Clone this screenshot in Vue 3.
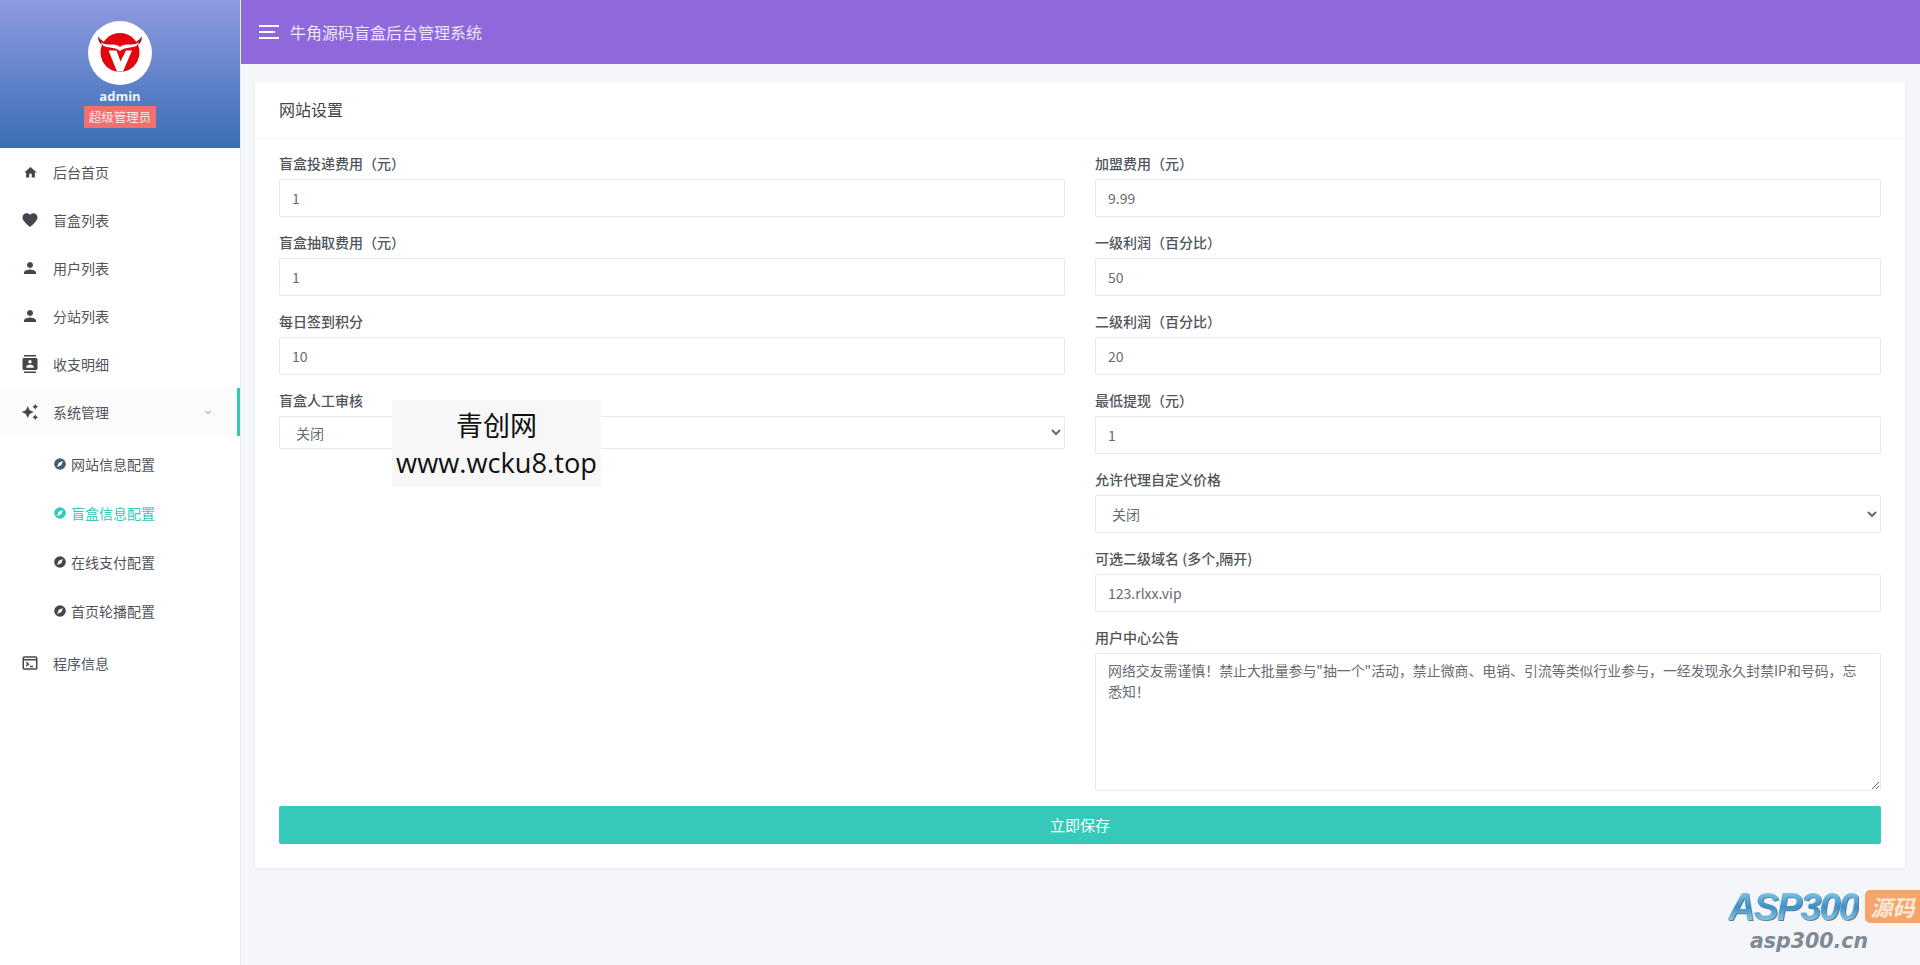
<script setup>
const menu = [
  { t: '后台首页', i: 'home', c: 'ico small' },
  { t: '盲盒列表', i: 'heart', c: 'ico' },
  { t: '用户列表', i: 'user', c: 'ico' },
  { t: '分站列表', i: 'user', c: 'ico' },
  { t: '收支明细', i: 'contacts', c: 'ico' },
]
const subs = [
  { t: '网站信息配置', c: 'sub teal-dark' },
  { t: '盲盒信息配置', c: 'sub active' },
  { t: '在线支付配置', c: 'sub' },
  { t: '首页轮播配置', c: 'sub' },
]
const icons = {
  home: 'M10 20v-6h4v6h5v-8h3L12 3 2 12h3v8z',
  heart: 'M12 21.35l-1.45-1.32C5.4 15.36 2 12.28 2 8.5 2 5.42 4.42 3 7.5 3c1.74 0 3.41.81 4.5 2.09C13.09 3.81 14.76 3 16.5 3 19.58 3 22 5.42 22 8.5c0 3.78-3.4 6.86-8.55 11.54L12 21.35z',
  user: 'M12 12c2.21 0 4-1.79 4-4s-1.79-4-4-4-4 1.79-4 4 1.79 4 4 4zm0 2c-2.67 0-8 1.34-8 4v2h16v-2c0-2.66-5.33-4-8-4z',
  contacts: 'M20 0H4v2h16V0zM4 24h16v-2H4v2zM20 4H4c-1.1 0-2 .9-2 2v12c0 1.1.9 2 2 2h16c1.1 0 2-.9 2-2V6c0-1.1-.9-2-2-2zm-8 2.75c1.24 0 2.25 1.01 2.25 2.25s-1.01 2.25-2.25 2.25S9.75 10.24 9.75 9 10.76 6.75 12 6.75zM17 17H7v-1.5c0-1.67 3.33-2.5 5-2.5s5 .83 5 2.5V17z',
  sparkle: 'M19 9l1.25-2.75L23 5l-2.75-1.25L19 1l-1.25 2.75L15 5l2.75 1.25L19 9zm-7.5.5L9 4 6.500 9.500 1 12l5.500 2.500L9 20l2.500-5.500L17 12l-5.500-2.500zM19 15l-1.25 2.750L15 19l2.750 1.250L19 23l1.250-2.750L23 19l-2.750-1.250L19 15z',
}
const left = [
  { l: '盲盒投递费用（元）', v: '1' },
  { l: '盲盒抽取费用（元）', v: '1' },
  { l: '每日签到积分', v: '10' },
  { l: '盲盒人工审核', v: '关闭', s: true, short: true },
]
const right = [
  { l: '加盟费用（元）', v: '9.99' },
  { l: '一级利润（百分比）', v: '50' },
  { l: '二级利润（百分比）', v: '20' },
  { l: '最低提现（元）', v: '1' },
  { l: '允许代理自定义价格', v: '关闭', s: true },
  { l: '可选二级域名 (多个,隔开)', v: '123.rlxx.vip' },
]
const notice = '网络交友需谨慎！禁止大批量参与"抽一个"活动，禁止微商、电销、引流等类似行业参与，一经发现永久封禁IP和号码，忘悉知！'
</script>

<template>
  <div class="layout">
    <aside class="side">
      <div class="profile">
        <div class="avatar">
          <svg viewBox="0 0 64 64" width="64" height="64">
            <circle cx="32" cy="31.500" r="19.500" fill="#e10610" />
            <path d="M10 15c0 4 1 7 4 9l3-1-2-3c-2-1-4-3-5-5zM54 15c0 4-1 7-4 9l-3-1 2-3c2-1 4-3 5-5z" fill="#a5121b" />
            <path d="M13 21c3 2.500 6 2.500 10 2.500 4 0 7 .5 9 2.500 2-2 5-2.500 9-2.500 4 0 7 0 10-2.500-1 3.500-4 5-9 5.500-4 .5-7 1-10 3.500-3-2.500-6-3-10-3.500-5-.5-8-2-9-5.500z" fill="#fff" />
            <path d="M20.500 29.500h8l4 11 5.500-11h6l-9 21h-6z" fill="#fff" />
          </svg>
        </div>
        <div class="uname">admin</div>
        <div class="role">超级管理员</div>
      </div>
      <nav class="nav">
        <a v-for="m in menu" :key="m.t" class="item">
          <span class="ico-box"><svg :class="m.c" viewBox="0 0 24 24"><path :d="icons[m.i]" /></svg></span>
          <span class="lbl">{{ m.t }}</span>
        </a>
        <a class="item open">
          <span class="ico-box"><svg class="ico" viewBox="0 0 24 24"><path :d="icons.sparkle" /></svg></span>
          <span class="lbl">系统管理</span>
          <svg class="chev" viewBox="0 0 10 10"><path d="M2.500 4l2.500 2.500L7.500 4" /></svg>
        </a>
        <div class="subs">
          <a v-for="s in subs" :key="s.t" :class="s.c">
            <svg class="compass" viewBox="0 0 12 12">
              <circle cx="6" cy="6" r="5.800" />
              <path class="needle" d="M9 3L7.200 7.200 3 9 4.800 4.800z" />
            </svg>
            <span>{{ s.t }}</span>
          </a>
        </div>
        <a class="item last">
          <span class="ico-box"><svg class="ico term" viewBox="0 0 24 24">
            <rect x="3" y="4" width="18" height="16" rx="1.500" />
            <path d="M3 7.500h18M7 11l3 2.500L7 16M12 16.500h4" />
          </svg></span>
          <span class="lbl">程序信息</span>
        </a>
      </nav>
    </aside>

    <div class="main">
      <header class="top">
        <svg class="burger" viewBox="0 0 20 14"><path d="M0 1h20M0 7h16M0 13h20" /></svg>
        <span>牛角源码盲盒后台管理系统</span>
      </header>
      <section class="card">
        <h2 class="card-title">网站设置</h2>
        <div class="card-body">
          <div class="cols">
            <div class="col">
              <div v-for="f in left" :key="f.l" class="field">
                <label>{{ f.l }}</label>
                <select v-if="f.s" :class="['ctl', { short: f.short }]"><option>{{ f.v }}</option></select>
                <input v-else class="ctl" :value="f.v" />
              </div>
            </div>
            <div class="col">
              <div v-for="f in right" :key="f.l" class="field">
                <label>{{ f.l }}</label>
                <select v-if="f.s" class="ctl"><option>{{ f.v }}</option></select>
                <input v-else class="ctl" :value="f.v" />
              </div>
              <div class="field">
                <label>用户中心公告</label>
                <textarea class="ctl area" :value="notice"></textarea>
              </div>
            </div>
          </div>
          <button class="save">立即保存</button>
        </div>
      </section>
    </div>

    <div class="mark">
      <div class="m1">青创网</div>
      <div class="m2">www.wcku8.top</div>
    </div>
    <div class="brand">
      <div class="b1"><span class="asp">ASP300</span><span class="tag">源码</span></div>
      <div class="b2">asp300.cn</div>
    </div>
  </div>
</template>

<style>
html, body { margin: 0; background: #f5f6fa; }
</style>

<style scoped>
.layout {
  display: flex;
  height: 965px;
  background: #f5f6fa;
  font-family: "Noto Sans CJK SC", "Open Sans", sans-serif;
  color: #495057;
  position: relative;
  overflow: hidden;
}
.side {
  width: 240px;
  flex: none;
  background: #fff;
  border-right: 1px solid #e9ebf2;
}
.profile {
  height: 148px;
  box-sizing: border-box;
  padding-top: 21px;
  display: flex;
  flex-direction: column;
  align-items: center;
  background: linear-gradient(180deg, #8e99e2 0%, #3a6fb4 100%);
}
.avatar {
  width: 64px;
  height: 64px;
  border-radius: 50%;
  background: #fff;
}
.uname {
  margin-top: 2px;
  font: 700 13px/18px "Open Sans", sans-serif;
  color: #eef3fb;
}
.role {
  margin-top: 1px;
  height: 22px;
  padding: 0 5px;
  background: #f1706f;
  color: #fbe9e9;
  font-size: 12.500px;
  line-height: 22px;
}
.nav { display: flex; flex-direction: column; }
.item {
  height: 48px;
  display: flex;
  align-items: center;
  padding-left: 21px;
  font-size: 14px;
  color: #50555c;
  position: relative;
}
.ico-box { width: 18px; height: 18px; display: flex; align-items: center; justify-content: center; flex: none; }
.lbl { margin-left: 14px; }
.ico { width: 18px; height: 18px; fill: #43474d; flex: none; }
.ico.small { width: 15px; height: 15px; }
.open { background: #fbfbfc; border-right: 3px solid #35c9b9; box-sizing: border-box; }
.chev { position: absolute; right: 24px; top: 19px; width: 10px; height: 10px; fill: none; stroke: #7d8288; stroke-width: 1; }
.subs { display: flex; flex-direction: column; padding-top: 3px; }
.sub {
  height: 49px;
  display: flex;
  align-items: center;
  padding-left: 54px;
  font-size: 14px;
  color: #50555c;
}
.sub span { margin-left: 5px; }
.compass { width: 12px; height: 12px; fill: #43474d; flex: none; }
.compass .needle { fill: #fff; }
.teal-dark .compass { fill: #44606a; }
.active { color: #35c9b9; }
.active .compass { fill: #35c9b9; }
.last { margin-top: 4px; }
.term { fill: none; stroke: #43474d; stroke-width: 2; }
.main { flex: 1; min-width: 0; display: flex; flex-direction: column; }
.top {
  height: 64px;
  background: #8f69dc;
  display: flex;
  align-items: center;
  padding-left: 18px;
  color: #ede6fa;
  font-size: 16px;
  flex: none;
}
.burger { width: 20px; height: 14px; fill: none; stroke: #fff; stroke-width: 2; margin-right: 11px; }
.card {
  margin: 18px 15px 0 14px;
  height: 786px;
  background: #fff;
  box-shadow: 0 1px 2px rgba(40, 50, 90, .06);
  display: flex;
  flex-direction: column;
}
.card-title {
  margin: 0;
  height: 56px;
  padding-left: 24px;
  font-size: 16px;
  font-weight: 400;
  line-height: 55px;
  color: #3f444a;
  border-bottom: 1px solid #f5f6f8;
  flex: none;
}
.card-body { padding: 14px 24px 0; display: flex; flex-direction: column; }
.cols { display: flex; gap: 30px; }
.col { flex: 1; min-width: 0; display: flex; flex-direction: column; gap: 15px; }
.field { display: flex; flex-direction: column; }
label {
  font-size: 14px;
  line-height: 21px;
  font-weight: 500;
  color: #50555c;
  margin-bottom: 5px;
}
.ctl {
  height: 38px;
  box-sizing: border-box;
  width: 100%;
  border: 1px solid #e6e9ee;
  border-radius: 2px;
  background: #fff;
  padding: 0 12px;
  font: 14px/21px "Noto Sans CJK SC", "Open Sans", sans-serif;
  color: #666c72;
  outline: none;
}
select.short { height: 33px; }
.area { height: 138px; padding: 6px 12px; line-height: 21px; display: block; resize: vertical; font-size: 13.900px; }
.save {
  margin-top: 15px;
  height: 38px;
  border: 0;
  border-radius: 2px;
  padding: 0 0 2px;
  background: #35c9b9;
  color: #fff;
  font: 15px "Noto Sans CJK SC", sans-serif;
}
.mark {
  position: absolute;
  left: 392px;
  top: 400px;
  width: 209px;
  height: 87px;
  background: #f7f7f7;
  color: #111;
  text-align: center;
  font-family: "Noto Sans CJK SC", "Open Sans", sans-serif;
}
.m1 { font-size: 27px; line-height: 41px; margin-top: 4px; }
.m2 { font: 27.200px/36px "Open Sans", sans-serif; white-space: nowrap; }
.brand { position: absolute; left: 1728px; top: 889px; width: 192px; }
.b1 { display: flex; align-items: center; justify-content: space-between; height: 35px; }
.asp {
  font: italic 900 38px/36px "Liberation Sans", sans-serif;
  letter-spacing: -2px;
  background: linear-gradient(180deg, #8fd0f0, #3d8fc4 50%, #a8d8ee);
  -webkit-background-clip: text;
  background-clip: text;
  color: transparent;
  filter: drop-shadow(1px 1px 0 #5c7f9b);
}
.tag {
  width: 55px;
  height: 33px;
  border-radius: 5px 0 0 5px;
  background: #f5a56b;
  color: #fde8d8;
  font: italic 700 22px/33px "Noto Sans CJK SC", sans-serif;
  text-align: center;
}
.b2 {
  margin: 4px 0 0 22px;
  font: italic 700 20.500px/26px "DejaVu Sans", sans-serif;
  color: #7f8a95;
  white-space: nowrap;
}
</style>
